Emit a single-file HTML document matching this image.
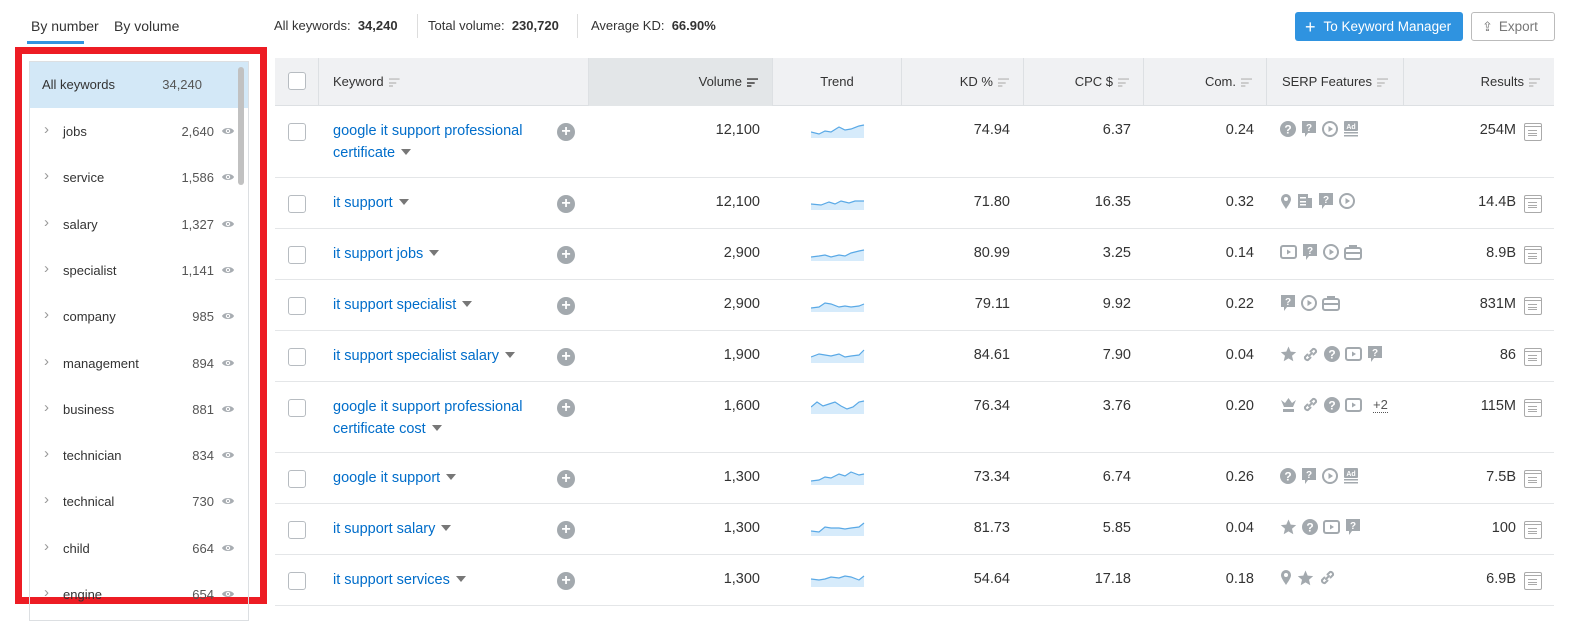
<!DOCTYPE html>
<html><head><meta charset="utf-8"><style>
*{box-sizing:border-box;margin:0;padding:0}
body{width:1594px;height:614px;overflow:hidden;background:#fff;font-family:"Liberation Sans",sans-serif;color:#333;position:relative}
.a{position:absolute;white-space:nowrap}
.tab{font-size:14px;top:18px;color:#333}
.stat{font-size:13px;top:18px;color:#333}
.stat b{font-weight:bold}
.sep{position:absolute;top:14px;width:1px;height:24px;background:#ddd}
.red{position:absolute;left:15px;top:47px;width:252px;height:557px;border:7px solid #ed1c24}
.panel{position:absolute;left:29px;top:61px;width:220px;height:560px;border:1px solid #dcdfe2;overflow:hidden}
.prow{position:absolute;left:0;width:208px;height:46px;font-size:13px}
.prow .n{position:absolute;left:33px;top:15px}
.prow .c{position:absolute;right:24px;top:15px;color:#555}
.prow .ch{position:absolute;left:14px;top:12px;color:#999;font-size:15px}
.prow svg{position:absolute;right:3px;top:17px}
.hdr{position:absolute;left:275px;top:58px;width:1279px;height:48px;background:#f0f1f3;border-bottom:1px solid #dde0e3}
.hc{position:absolute;top:0;height:48px;border-right:1px solid #dde0e3;font-size:13px;line-height:48px}
.sort{display:inline-block;vertical-align:middle;margin-left:5px;width:11px;height:9px;background:linear-gradient(#ccc 0 2px,transparent 2px 4px,#ccc 4px 6px,transparent 6px 7px,#ccc 7px 9px);clip-path:polygon(0 0,100% 0,100% 22%,70% 22%,70% 44%,70% 66%,40% 66%,40% 100%,0 100%)}
.row{position:absolute;left:275px;width:1279px;border-bottom:1px solid #e4e6e8}
.cb{position:absolute;left:13px;width:18px;height:18px;border:1px solid #b7bcc1;border-radius:3px;background:#fff}
.kw{position:absolute;left:58px;font-size:14.5px;color:#006dca;line-height:22px}
.dd{display:inline-block;width:0;height:0;border-left:5px solid transparent;border-right:5px solid transparent;border-top:6px solid #777;margin-left:6px;vertical-align:2px}
.plus{position:absolute;left:282px;width:18px;height:18px;border-radius:50%;background:#a3a9ae;color:#fff;font-size:16px;line-height:18px;text-align:center;font-weight:bold}
.num{position:absolute;font-size:14.5px;text-align:right;color:#333}
.res{position:absolute;right:12px;width:18px;height:18px;border:1px solid #aaa;border-radius:2px}
.res:before{content:"";position:absolute;left:3px;top:6px;width:9px;height:6px;background:linear-gradient(#aaa 0 1px,transparent 1px 3px,#aaa 3px 4px,transparent 4px 5px,#aaa 5px 6px)}
.res:after{content:"";position:absolute;left:0;top:2px;width:16px;height:1px;background:#aaa}
.ic{position:absolute;left:1005px;display:flex;gap:5px;align-items:center}
</style></head><body>
<div class="a tab" style="left:31px">By number</div>
<div class="a" style="left:27px;top:41px;width:57px;height:3px;background:#2f93e0"></div>
<div class="a tab" style="left:114px">By volume</div>
<div class="a stat" style="left:274px">All keywords:&nbsp; <b>34,240</b></div>
<div class="sep" style="left:417px"></div>
<div class="a stat" style="left:428px">Total volume:&nbsp; <b>230,720</b></div>
<div class="sep" style="left:577px"></div>
<div class="a stat" style="left:591px">Average KD:&nbsp; <b>66.90%</b></div>
<div class="a" style="left:1295px;top:12px;width:168px;height:29px;background:#2f93e0;border-radius:3px;color:#fff;font-size:13.5px;line-height:29px;padding-left:10px"><span style="font-size:18px;vertical-align:-2px;margin-right:8px">+</span>To Keyword Manager</div>
<div class="a" style="left:1471px;top:12px;width:84px;height:29px;border:1px solid #bbb;border-radius:3px;color:#777;font-size:13.5px;line-height:27px;padding-left:10px"><span style="font-size:13px;margin-right:6px">⇪</span>Export</div>

<div class="red"></div>
<div class="panel">
<div class="prow" style="top:0;width:218px;background:#d3e8f7"><span class="n" style="left:12px">All keywords</span><span class="c" style="right:46px">34,240</span></div>
<div class="a" style="left:208px;top:5px;width:6px;height:118px;background:#c1c1c1;border-radius:3px"></div>
</div>
<div id="pl"></div>

<div class="hdr">
<div class="hc" style="left:0;width:44px"><div style="position:absolute;left:13px;top:14px;width:18px;height:18px;border:1px solid #b7bcc1;border-radius:3px;background:#fff"></div></div>
<div class="hc" style="left:44px;width:270px;padding-left:14px">Keyword<span class="sort"></span></div>
<div class="hc" style="left:314px;width:184px;background:#e3e6e8;text-align:right;padding-right:14px">Volume<span class="sort" style="filter:brightness(.5)"></span></div>
<div class="hc" style="left:498px;width:129px;text-align:center">Trend</div>
<div class="hc" style="left:627px;width:122px;text-align:right;padding-right:14px">KD %<span class="sort"></span></div>
<div class="hc" style="left:749px;width:120px;text-align:right;padding-right:14px">CPC $<span class="sort"></span></div>
<div class="hc" style="left:869px;width:123px;text-align:right;padding-right:14px">Com.<span class="sort"></span></div>
<div class="hc" style="left:992px;width:137px;text-align:center">SERP Features<span class="sort"></span></div>
<div class="hc" style="left:1129px;width:150px;border:none;text-align:right;padding-right:14px">Results<span class="sort"></span></div>
</div>
<div id="rows"></div>
<script>
var P=[["jobs","2,640"],["service","1,586"],["salary","1,327"],["specialist","1,141"],["company","985"],["management","894"],["business","881"],["technician","834"],["technical","730"],["child","664"],["engine","654"]];
var eye='<svg width="14" height="10" viewBox="0 0 14 10"><path d="M1 5C3 1 11 1 13 5C11 9 3 9 1 5Z" fill="#a8adb2"/><circle cx="7" cy="5" r="2.2" fill="#fff"/><circle cx="7" cy="5" r="1.1" fill="#a8adb2"/></svg>';
var h='';P.forEach(function(p,i){h+='<div class="prow" style="top:'+(47+i*46.3)+'px"><span class="ch">›</span><span class="n">'+p[0]+'</span><span class="c">'+p[1]+'</span>'+eye+'</div>'});
document.querySelector('.panel').insertAdjacentHTML('beforeend',h);
var g='#a3a9ae';
var I={q:'<svg width="16" height="16"><circle cx="8" cy="8" r="8" fill="'+g+'"/><text x="8" y="12.5" font-size="12" font-weight="bold" text-anchor="middle" fill="#fff" font-family="Liberation Sans">?</text></svg>',
b:'<svg width="16" height="18"><path d="M1 1H15V13H7L4 17V13H1Z" fill="'+g+'"/><text x="8" y="11" font-size="10" font-weight="bold" text-anchor="middle" fill="#fff" font-family="Liberation Sans">?</text></svg>',
p:'<svg width="16" height="16"><circle cx="8" cy="8" r="7" fill="none" stroke="'+g+'" stroke-width="2"/><path d="M6.5 5L11 8L6.5 11Z" fill="'+g+'"/></svg>',
v:'<svg width="17" height="14"><rect x="1" y="1" width="15" height="12" rx="2" fill="none" stroke="'+g+'" stroke-width="2"/><path d="M7 4.5L11 7L7 9.5Z" fill="'+g+'"/></svg>',
ad:'<svg width="16" height="16"><rect x="1" y="0" width="14" height="10" rx="1" fill="'+g+'"/><text x="8" y="8" font-size="7" font-weight="bold" text-anchor="middle" fill="#fff" font-family="Liberation Sans">Ad</text><rect x="1" y="11" width="14" height="1.5" fill="'+g+'"/><rect x="1" y="14" width="14" height="1.5" fill="'+g+'"/></svg>',
pin:'<svg width="12" height="17"><path d="M6 16C2 10 1 8 1 6A5 5 0 0 1 11 6C11 8 10 10 6 16Z" fill="'+g+'"/><circle cx="6" cy="6" r="2" fill="#fff"/></svg>',
doc:'<svg width="16" height="16"><rect x="1" y="1" width="10" height="14" fill="'+g+'"/><rect x="11" y="5" width="4" height="10" fill="'+g+'"/><rect x="3" y="4" width="6" height="1.5" fill="#fff"/><rect x="3" y="8" width="6" height="1.5" fill="#fff"/><rect x="3" y="11" width="6" height="1.5" fill="#fff"/></svg>',
job:'<svg width="18" height="15"><rect x="1" y="3" width="16" height="11" rx="2" fill="none" stroke="'+g+'" stroke-width="2"/><path d="M6 3V1H12V3" fill="none" stroke="'+g+'" stroke-width="2"/><rect x="1" y="7" width="16" height="2" fill="'+g+'"/></svg>',
st:'<svg width="17" height="16"><path d="M8.5 0.5L10.7 5.6L16.2 6.1L12 9.8L13.3 15.3L8.5 12.4L3.7 15.3L5 9.8L0.8 6.1L6.3 5.6Z" fill="'+g+'"/></svg>',
ln:'<svg width="17" height="17"><path d="M7 10L10 7M5.5 8.5L3 11A2.5 2.5 0 0 0 6 14L8.5 11.5M8.5 5.5L11 3A2.5 2.5 0 0 1 14 6L11.5 8.5" fill="none" stroke="'+g+'" stroke-width="2" stroke-linecap="round"/></svg>',
cr:'<svg width="17" height="16"><path d="M1 3L4 10H13L16 3L12 6L8.5 1L5 6Z" fill="'+g+'"/><rect x="3" y="12" width="11" height="3" fill="'+g+'"/></svg>'};
var R=[[106,72,"google it support professional<br>certificate","12,100","74.94","6.37","0.24",["q","b","p","ad"],"254M"],
[178,51,"it support","12,100","71.80","16.35","0.32",["pin","doc","b","p"],"14.4B"],
[229,51,"it support jobs","2,900","80.99","3.25","0.14",["v","b","p","job"],"8.9B"],
[280,51,"it support specialist","2,900","79.11","9.92","0.22",["b","p","job"],"831M"],
[331,51,"it support specialist salary","1,900","84.61","7.90","0.04",["st","ln","q","v","b"],"86"],
[382,71,"google it support professional<br>certificate cost","1,600","76.34","3.76","0.20",["cr","ln","q","v","+2"],"115M"],
[453,51,"google it support","1,300","73.34","6.74","0.26",["q","b","p","ad"],"7.5B"],
[504,51,"it support salary","1,300","81.73","5.85","0.04",["st","q","v","b"],"100"],
[555,51,"it support services","1,300","54.64","17.18","0.18",["pin","st","ln"],"6.9B"]];
var tr=["M0 10L8 12L14 9L20 10L28 5L34 8L40 7L48 4L53 3","M0 10L10 11L18 8L24 10L30 7L38 9L44 7L53 7","M0 12L8 11L14 10L20 12L28 10L34 11L40 8L48 6L53 5","M0 12L8 11L14 7L20 8L28 11L34 10L40 11L48 10L53 8","M0 10L8 7L14 8L20 9L28 7L34 10L40 9L48 8L53 3","M0 9L6 4L12 8L18 6L24 4L30 8L36 11L42 9L48 4L53 3","M0 12L8 11L14 8L20 9L28 5L34 7L40 3L48 6L53 5","M0 11L8 12L14 7L20 8L28 8L34 9L40 8L48 7L53 3","M0 8L8 9L14 8L20 6L28 7L34 5L40 6L48 9L53 5"];
var o='';R.forEach(function(r,i){var t=r[0],hh=r[1];
var ic=r[7].map(function(k){return k=="+2"?'<span style="font-size:13px;color:#555;border-bottom:1px dotted #555;margin-left:6px">+2</span>':I[k]}).join('');
o+='<div class="row" style="top:'+t+'px;height:'+hh+'px">'+
'<div class="cb" style="top:17px"></div>'+
'<div class="kw" style="top:14px">'+r[2]+'<span class="dd"></span></div>'+
'<div class="plus" style="top:17px">+</div>'+
'<div class="num" style="top:16px;right:794px">'+r[3]+'</div>'+
'<svg style="position:absolute;left:536px;top:16px" width="54" height="16"><path d="'+tr[i]+'L53 16L0 16Z" fill="#d6ebfb"/><path d="'+tr[i]+'" fill="none" stroke="#5aa9e6" stroke-width="1.2"/></svg>'+
'<div class="num" style="top:16px;right:544px">'+r[4]+'</div>'+
'<div class="num" style="top:16px;right:423px">'+r[5]+'</div>'+
'<div class="num" style="top:16px;right:300px">'+r[6]+'</div>'+
'<div class="ic" style="top:14px">'+ic+'</div>'+
'<div class="num" style="top:16px;right:38px">'+r[8]+'</div>'+
'<div class="res" style="top:17px"></div></div>'});
document.getElementById('rows').innerHTML=o;
</script>
</body></html>
